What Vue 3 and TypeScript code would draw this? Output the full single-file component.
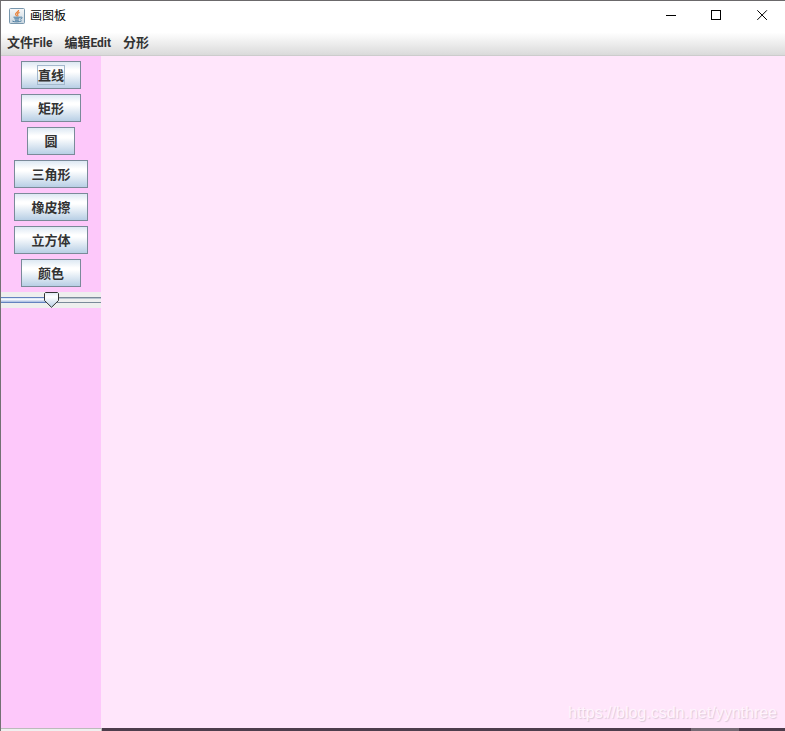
<script setup lang="ts">
import { computed, ref } from 'vue'

interface Menu {
  zh: string
  en: string
}

const menus: Menu[] = [
  { zh: '文件', en: 'File' },
  { zh: '编辑', en: 'Edit' },
  { zh: '分形', en: '' },
]
const tools: string[] = ['直线', '矩形', '圆', '三角形', '橡皮擦', '立方体', '颜色']
const active = ref<string>('直线')
const size = ref<number>(50)
const knob = computed(() => ({ left: `calc((100% - 15px) * ${size.value / 100})` }))
const fill = computed(() => ({ width: `${size.value}%` }))
</script>

<template>
  <div class="window">
    <header class="titlebar">
      <svg class="logo" width="16" height="16" viewBox="0 0 16 16" aria-hidden="true">
        <defs>
          <linearGradient id="tile" x1="0" y1="0" x2="0" y2="1">
            <stop offset="0" stop-color="#f7f8f9" />
            <stop offset="1" stop-color="#c9d6e0" />
          </linearGradient>
        </defs>
        <rect x=".5" y=".5" width="15" height="15" rx="1" fill="url(#tile)" stroke="#7897ad" />
        <path d="M9.6 2C10 4 6 4.7 6.6 6.5C6.8 7.1 7.6 7.5 7.6 8.2M10.6 4.4C8.3 5.2 8.1 6 8.8 6.8C9.2 7.4 8.9 7.9 8.5 8.3" fill="none" stroke="#e8823c" stroke-width="1.2" />
        <path d="M4.5 9.2H11M5.3 10.8H10.3M6 12.2H9.8M11 9.3C14 8.4 13.6 10.8 11.2 11.2M3.4 13.1C5.5 14.2 10.5 14.1 12.6 12.8" fill="none" stroke="#47799e" stroke-width="1" />
      </svg>
      <h1 class="title">画图板</h1>
      <div class="controls">
        <button type="button" class="control" aria-label="最小化">
          <svg width="11" height="11" viewBox="0 0 11 11" shape-rendering="crispEdges"><path d="M1 5.5H11" stroke="#000" /></svg>
        </button>
        <button type="button" class="control" aria-label="最大化">
          <svg width="11" height="11" viewBox="0 0 11 11" shape-rendering="crispEdges"><rect x=".5" y=".5" width="9" height="9" fill="none" stroke="#000" /></svg>
        </button>
        <button type="button" class="control" aria-label="关闭">
          <svg width="11" height="11" viewBox="0 0 11 11"><path d="M.3 .3L9.9 9.9M9.9 .3L.3 9.9" stroke="#000" stroke-width="1" /></svg>
        </button>
      </div>
    </header>

    <nav class="menubar">
      <button v-for="menu in menus" :key="menu.zh" type="button" class="menu">
        {{ menu.zh }}<span v-if="menu.en" class="latin">{{ menu.en }}</span>
      </button>
    </nav>

    <main class="body">
      <aside class="palette">
        <button v-for="tool in tools" :key="tool" type="button" class="tool" @click="active = tool">
          <span class="caption" :class="{ focused: tool === active }">{{ tool }}</span>
        </button>
        <div class="slider">
          <div class="track"><div class="fill" :style="fill"></div></div>
          <svg class="knob" :style="knob" width="15" height="16" viewBox="0 0 15 16" aria-hidden="true">
            <defs>
              <linearGradient id="knob" x1="0" y1="0" x2="0" y2="1">
                <stop offset="0" stop-color="#dde8f3" />
                <stop offset=".3" stop-color="#fff" />
                <stop offset="1" stop-color="#b8cfe5" />
              </linearGradient>
            </defs>
            <path d="M1.5 .5H13.5L14.5 1.5V8.5L7.5 15.3L.5 8.5V1.5Z" fill="url(#knob)" stroke="#333" />
          </svg>
          <input v-model.number="size" class="range" type="range" min="0" max="100" aria-label="粗细" />
        </div>
      </aside>
      <section class="canvas">
        <span class="watermark">https://blog.csdn.net/yynthree</span>
      </section>
    </main>

    <footer class="edge">
      <div class="edge-left"></div>
      <div class="edge-right"><div class="edge-tab"></div></div>
    </footer>
  </div>
</template>

<style>
body {
  margin: 0;
}
</style>

<style scoped>
.window {
  box-sizing: border-box;
  display: flex;
  flex-direction: column;
  min-height: 100vh;
  border-top: 1px solid #6b696b;
  border-left: 1px solid #737173;
  background: #fff;
  font-family: "Liberation Sans", "Noto Sans CJK SC", sans-serif;
  color: #333;
}
button {
  margin: 0;
  font-family: inherit;
  color: inherit;
}
.titlebar {
  display: flex;
  align-items: center;
  height: 29px;
  padding-left: 8px;
}
.title {
  margin: 0 0 0 5px;
  font-size: 12px;
  line-height: 16px;
  font-weight: 400;
  color: #000;
}
.controls {
  display: flex;
  height: 100%;
  margin-left: auto;
}
.control {
  display: flex;
  align-items: center;
  justify-content: center;
  width: 46px;
  padding: 0;
  border: 0;
  background: none;
}
.menubar {
  box-sizing: border-box;
  display: flex;
  align-items: center;
  gap: 12px;
  height: 26px;
  padding: 0 6px;
  border-bottom: 1px solid #ccc;
  background: linear-gradient(#fff 10%, #dadada);
}
.menu {
  padding: 0;
  border: 0;
  background: none;
  font-size: 13px;
  line-height: 20px;
  font-weight: 700;
}
.latin {
  font-family: Roboto, "Liberation Sans", sans-serif;
  font-size: 12px;
}
.body {
  flex: 1;
  display: flex;
}
.palette {
  box-sizing: border-box;
  flex: none;
  display: flex;
  flex-direction: column;
  align-items: center;
  gap: 5px;
  width: 100px;
  padding-top: 5px;
  background: #fdc8fa;
}
.tool {
  box-sizing: border-box;
  display: flex;
  align-items: center;
  height: 28px;
  padding: 0 15px;
  border: 1px solid #7a8a99;
  border-radius: 0;
  background: linear-gradient(#dde8f3, #fff 30%, #fff 38%, #b8cfe5);
  font-size: 13px;
  line-height: 16px;
  font-weight: 700;
}
.caption {
  padding-top: 2px;
  border: 1px solid transparent;
}
.caption.focused {
  border-color: #a3b8cc;
}
.slider {
  position: relative;
  box-sizing: border-box;
  width: 100%;
  height: 16px;
  padding-top: 5px;
  background: #eee;
}
.track {
  box-sizing: border-box;
  height: 6px;
  border-top: 1px solid #7a8a99;
  border-bottom: 1px solid #7a8a99;
  background: linear-gradient(#b8c4d0 25%, #eee 25%);
}
.fill {
  box-sizing: border-box;
  position: relative;
  height: 6px;
  margin-top: -1px;
  border-top: 1px solid #6382bf;
  border-bottom: 1px solid #6382bf;
  background: linear-gradient(#c8d8ee, #fff 30%, #a3b8e0);
}
.knob {
  position: absolute;
  top: 0;
}
.range {
  position: absolute;
  inset: 0;
  width: 100%;
  height: 100%;
  margin: 0;
  opacity: 0;
}
.canvas {
  flex: 1;
  display: flex;
  align-items: flex-end;
  justify-content: flex-end;
  padding: 0 8px 6px;
  background: #ffe6fb;
}
.watermark {
  font-size: 16px;
  line-height: 18px;
  color: #fff4fd;
  text-shadow: 1px 1px 1px #dccad9;
}
.edge {
  display: flex;
  height: 3px;
}
.edge-left {
  box-sizing: border-box;
  width: 101px;
  border-top: 1px solid #bbb;
  border-right: 1px solid #bbb;
  background: #f0f0f0;
}
.edge-right {
  flex: 1;
  display: flex;
  justify-content: flex-end;
  padding-right: 46px;
  background: #4d3d4c;
}
.edge-tab {
  width: 48px;
  background: #766b75;
}
</style>
